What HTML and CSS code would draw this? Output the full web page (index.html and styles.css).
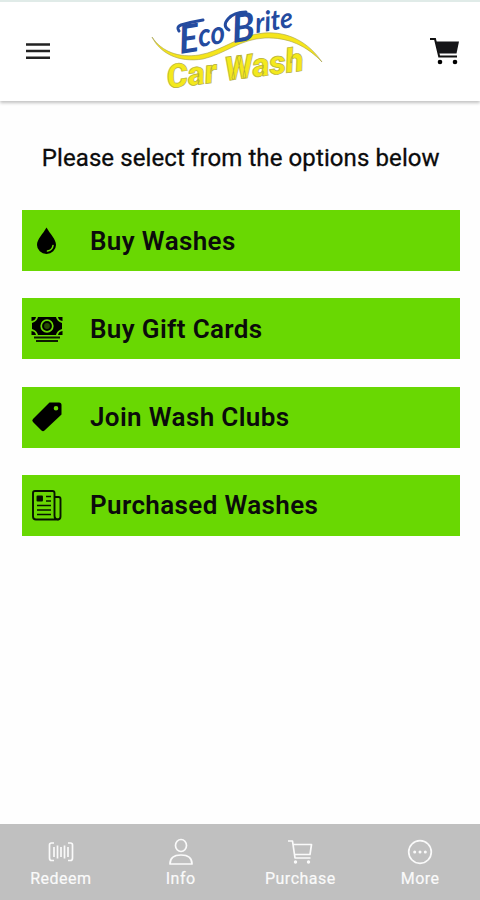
FILE: index.html
```
<!DOCTYPE html>
<html lang="en">
<head>
    <meta charset="UTF-8">
    <meta name="viewport" content="width=device-width, initial-scale=1.0">
    <title>EcoBrite Car Wash</title>
    <link rel="stylesheet" href="styles.css">
</head>
<body>
    <header class="header">
        <button class="icon-button" aria-label="Menu">
            <svg width="24" height="18" viewBox="0 0 24 18" stroke="#222" stroke-width="2.4">
                <path d="M0 2.5h24M0 9h24M0 15.8h24"/>
            </svg>
        </button>

        <svg class="logo" width="180" height="97" viewBox="148 2 180 97">
            <path class="swoosh" d="M152 37C162 52 179 58 199 55C223 51 238 35 264 33C289 31 309 43 322 62C307 46 288 37 265 38C240 39 225 54 203 59C178 63 160 53 152 37Z"/>
            <g class="logo-eco">
                <text transform="translate(180 54) rotate(-9) skewX(-4)" font-size="39" textLength="20" lengthAdjust="spacingAndGlyphs">E</text>
                <text transform="translate(199 47) rotate(-9) skewX(-4)" font-size="32" textLength="27" lengthAdjust="spacingAndGlyphs">co</text>
                <text transform="translate(233 43) rotate(-9) skewX(-4)" font-size="39" textLength="23" lengthAdjust="spacingAndGlyphs">B</text>
                <text transform="translate(256 33) rotate(-9) skewX(-4)" font-size="28" textLength="38" lengthAdjust="spacingAndGlyphs">rite</text>
            </g>
            <!-- brush flourishes on the capitals -->
            <path class="flourish" d="M179 31Q176 27 181 25Q191 22 203 20M229 30Q222 26 228 19Q234 12 246 12"/>
            <text class="logo-wash" transform="translate(168 88.5) rotate(-7.5)" font-size="33" textLength="138" lengthAdjust="spacingAndGlyphs">Car Wash</text>
        </svg>

        <button class="icon-button" aria-label="Cart">
            <svg width="30" height="28" viewBox="0 0 30 28">
                <path d="M0 2H5L9.200 19.500H27" fill="none" stroke="#111" stroke-width="2"/>
                <path d="M5.500 4.500H29L26.500 16.500H8.500Z" fill="#151518"/>
                <circle cx="10" cy="25" r="2.300"/>
                <circle cx="25" cy="25" r="2.300"/>
            </svg>
        </button>
    </header>

    <main class="content">
        <p class="prompt">Please select from the options below</p>

        <div class="options">
            <a class="option">
                <svg width="32" height="32" viewBox="0 0 32 32">
                    <path d="M15.500 2.500C12 9 6 14 6 20A9.500 9 0 0 0 25 20C25 14 19 9 15.500 2.500Z"/>
                    <path d="M22 20.500Q21.500 25 16.500 26" fill="none" stroke="#69d802" stroke-width="1.600" stroke-linecap="round"/>
                </svg>
                <span class="label">Buy Washes</span>
            </a>
            <a class="option">
                <svg width="32" height="32" viewBox="0 0 32 32">
                    <path d="M7 4H25Q26 8.500 31 10V16Q26 17.500 25 22H7Q6 17.500 1 16V10Q6 8.500 7 4Z"/>
                    <path d="M0.500 4H5Q4.500 7.500 0.500 8ZM31.500 4H27Q27.500 7.500 31.500 8ZM0.500 22H5Q4.500 18.500 0.500 18ZM31.500 22H27Q27.500 18.500 31.500 18Z"/>
                    <circle cx="16" cy="13" r="5.800" fill="none" stroke="#69d802" stroke-width="1.700"/>
                    <circle cx="16" cy="13" r="2.900" fill="#254d00"/>
                    <path d="M3 24.500H29M5 28H27" stroke="#0c1b00" stroke-width="1.900"/>
                </svg>
                <span class="label">Buy Gift Cards</span>
            </a>
            <a class="option">
                <svg width="32" height="32" viewBox="0 0 32 32">
                    <path fill-rule="evenodd" d="M18.500 1.500H28Q30.500 1.500 30.500 4V13.500L13.500 29.500Q12 31 10.500 29.500L2 21Q0.500 19.500 2 18ZM25 5A2.300 2.300 0 1 0 25 9.600A2.300 2.300 0 1 0 25 5Z"/>
                </svg>
                <span class="label">Join Wash Clubs</span>
            </a>
            <a class="option">
                <svg width="32" height="32" viewBox="0 0 32 32" fill="none" stroke="#071400" stroke-width="1.900" stroke-linejoin="round">
                    <path d="M4 2H21.500Q23.500 2 23.500 4V26.500Q23.500 30.500 27 30.500H5Q2 30.500 2 27.500V4Q2 2 4 2Z"/>
                    <path d="M23.500 8H27.500Q29.500 8 29.500 10V27.500Q29.500 30.500 26.500 30.500"/>
                    <rect x="6.500" y="7.500" width="4.500" height="4" fill="#071400"/>
                    <path d="M15 7.500H20M15 12H20M6 16.500H20M6 21H20M6 25.500H20" stroke-width="1.500"/>
                </svg>
                <span class="label">Purchased Washes</span>
            </a>
        </div>
    </main>

    <nav class="tabs">
        <a class="tab">
            <svg width="28" height="28" viewBox="0 0 28 28">
                <path d="M7 5H4.500Q2.500 5 2.500 7V20Q2.500 22.500 4.500 22.500H7M21 5H23.500Q25.500 5 25.500 7V20Q25.500 22.500 23.500 22.500H21"/>
                <path d="M7 9V19M10.500 7.500V20.500M14 9V19M17.500 7.500V20.500M21 9V19"/>
            </svg>
            <span>Redeem</span>
        </a>
        <a class="tab">
            <svg width="28" height="28" viewBox="0 0 28 28">
                <ellipse cx="14" cy="7.500" rx="5.500" ry="6"/>
                <path d="M3 26C3 19.500 8 17 14 17S25 19.500 25 26Z"/>
            </svg>
            <span>Info</span>
        </a>
        <a class="tab">
            <svg width="28" height="28" viewBox="0 0 28 28">
                <path d="M2 3H6.500L9 20H24.500M7 6.500H25.500L24 16.500H8.500"/>
                <g class="dots"><circle cx="9.500" cy="24" r="1.700"/><circle cx="22.500" cy="24" r="1.700"/></g>
            </svg>
            <span>Purchase</span>
        </a>
        <a class="tab">
            <svg width="28" height="28" viewBox="0 0 28 28">
                <circle cx="14" cy="14" r="11.300"/>
                <g class="dots"><circle cx="8.700" cy="14" r="1.500"/><circle cx="14" cy="14" r="1.500"/><circle cx="19.300" cy="14" r="1.500"/></g>
            </svg>
            <span>More</span>
        </a>
    </nav>
</body>
</html>
```
FILE: styles.css
```
* {
    box-sizing: border-box;
}

body {
    margin: 0;
    height: 100vh;
    display: flex;
    flex-direction: column;
    background-color: #fefefe;
    color: #0b0b0b;
    font-family: Roboto, "Liberation Sans", sans-serif;
}

.header {
    height: 101px;
    padding: 0 20px 2px 26px;
    border-top: 2px solid #e0ebe8;
    display: grid;
    grid-template-columns: 122px 180px 1fr;
    align-items: center;
    background-color: #fff;
    box-shadow: 0 2px 3px rgba(0, 0, 0, 0.24);
}

.icon-button {
    display: flex;
    padding: 0;
    border: none;
    background: none;
}

.icon-button:last-child {
    justify-self: end;
}

.logo {
    display: block;
    overflow: visible;
}

.swoosh {
    fill: #f5e51b;
    stroke: #a5a050;
    stroke-width: 0.6;
}

.logo-eco {
    fill: #244b9f;
    font-family: Lato, sans-serif;
    font-weight: 700;
    font-style: italic;
}

.flourish {
    fill: none;
    stroke: #244b9f;
    stroke-width: 3;
    stroke-linecap: round;
}

.logo-wash {
    fill: #f4e91c;
    stroke: #b5af3c;
    stroke-width: 0.7;
    font-family: Roboto, sans-serif;
    font-weight: 900;
    font-style: italic;
}

.content {
    flex: 1;
    padding: 43px 20.5px 0 22px;
}

.prompt {
    margin: 0 0 37px;
    font-size: 24px;
    line-height: 29px;
    letter-spacing: 0.1px;
    text-align: center;
    white-space: nowrap;
    -webkit-text-stroke: 0.3px;
}

.options {
    display: flex;
    flex-direction: column;
    gap: 27.3px;
}

.option {
    height: 61px;
    padding-left: 9px;
    display: flex;
    align-items: center;
    gap: 27px;
    background-color: #69d802;
}

.label {
    font-size: 26px;
    font-weight: 600;
    line-height: 30px;
    letter-spacing: 0.37px;
}

.tabs {
    height: 76px;
    padding: 14px 0 0 1px;
    display: grid;
    grid-template-columns: repeat(4, 1fr);
    background-color: #c0c0c0;
}

.tab {
    display: flex;
    flex-direction: column;
    align-items: center;
    color: #fafafa;
    font-size: 16px;
    line-height: 20px;
    letter-spacing: 0.5px;
    gap: 3px;
    -webkit-text-stroke: 0.2px;
}

.tab svg {
    fill: none;
    stroke: #fafafa;
    stroke-width: 1.7;
    stroke-linejoin: round;
}

.tab .dots {
    fill: #fafafa;
    stroke: none;
}
```
